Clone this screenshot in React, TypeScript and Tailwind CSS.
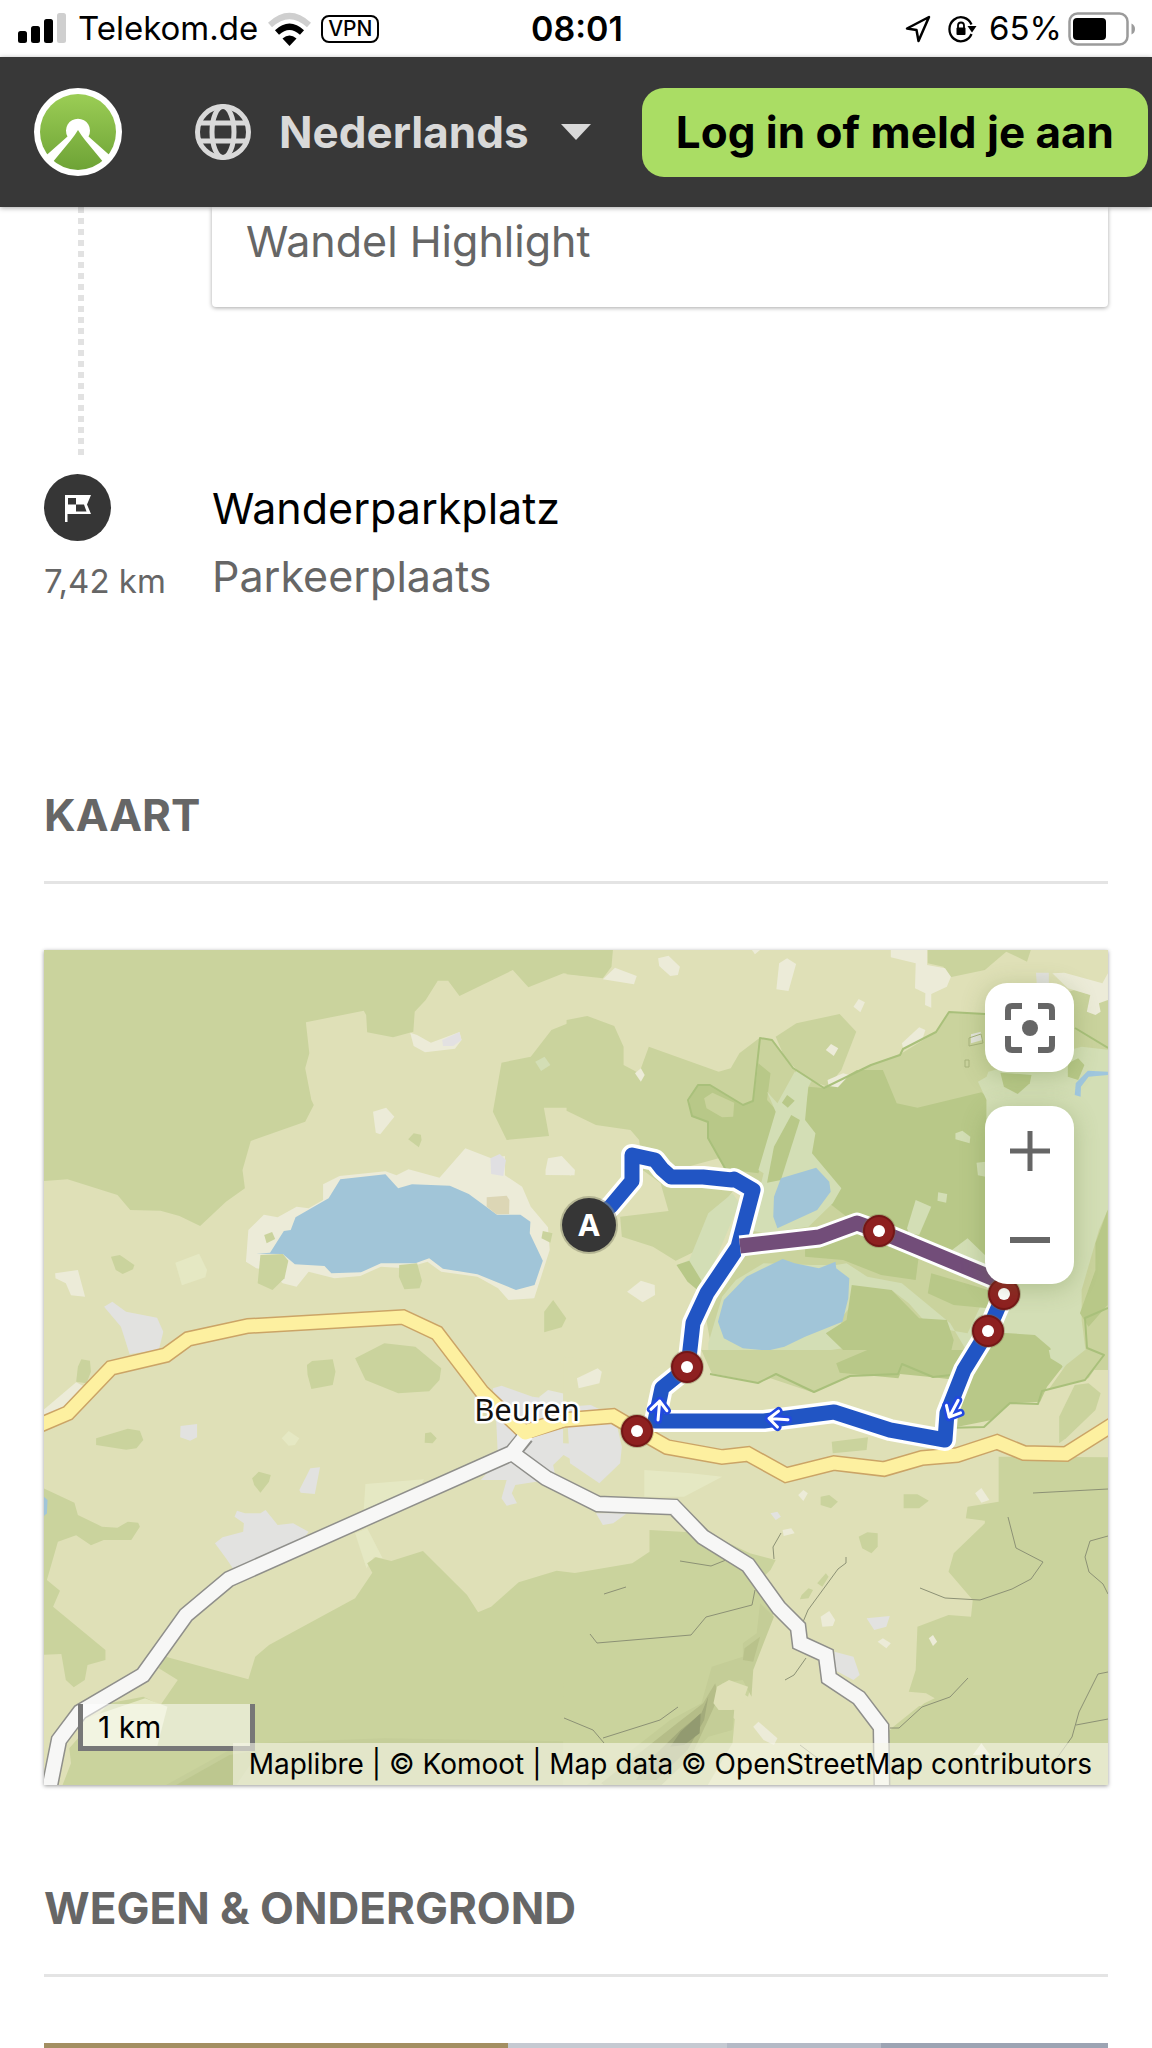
import React from "react";

const C = {
  land: "#dfe0b7",
  wood: "#cad39d",
  dense: "#b8c888",
  park: "#d3deb5",
  water: "#a1c5d8",
  town: "#e2e2e0",
  pale: "#ecebd8",
  field: "#e5e8c3",
};

type Shape = [string, string];

const northWest: Shape[] = [
  [C.wood, "14,20 1580,20 1580,107 1520,100 1418,142 1373,90 1218,168 1185,122 1155,122 1120,180 1088,215 1084,275 1025,292 950,277 947,225 940,212 772,247 782,340 770,385 788,480 795,495 770,545 612,603 588,690 595,745 540,785 465,858 405,828 350,812 262,810 225,765 80,718 0,724 0,20"],
  [C.wood, "1580,230 1485,270 1425,350 1340,368 1315,515 1355,600 1478,588 1463,503 1530,503 1580,535"],
  [C.park, "1438,365 1465,350 1482,375 1455,393"],
  [C.pale, "1075,278 1095,285 1135,308 1218,276 1224,300 1205,326 1118,337 1085,318"],
  ["#e3e1e2", "1168,300 1218,276 1224,300 1200,318 1170,318"],
  [C.pale, "967,515 1005,503 1029,530 988,583 975,578"],
  [C.wood, "1069,598 1085,580 1106,584 1108,600 1100,622"],
  [C.pale, "1468,690 1475,655 1515,648 1553,690 1552,706 1468,705"],
  [C.pale, "598,965 605,870 650,824 690,832 745,800 780,805 822,780 822,733 870,708 1003,694 1035,706 1070,688 1160,713 1235,625 1310,655 1350,648 1350,706 1400,740 1425,800 1475,862 1480,930 1435,1075 1360,1080 1330,1045 1270,1010 1165,995 1125,965 1060,985 990,980 930,1008 855,1015 780,995 745,1040 705,1030 660,990 628,985"],
  ["#e0dfe2", "1308,655 1335,642 1353,660 1345,708 1310,702"],
  [C.water, "628,941 668,938 708,873 728,870 742,832 838,775 872,718 1003,703 1040,745 1080,733 1190,737 1245,762 1327,824 1395,824 1424,845 1422,880 1460,962 1436,1035 1382,1050 1270,1003 1170,986 1130,955 1090,970 990,970 932,997 846,1000 826,978 740,973 705,942"],
  ["#dcd6b5", "1297,772 1355,767 1363,780 1362,822 1325,823 1297,800"],
  [C.wood, "640,945 705,942 721,962 710,1015 675,1050 632,1030"],
  [C.wood, "1043,975 1095,970 1109,1022 1102,1045 1058,1048 1042,1010"],
  [C.wood, "651,885 674,876 683,897 658,910"],
  [C.wood, "1460,873 1488,880 1482,908 1456,895"],
  [C.wood, "206,950 232,945 274,975 270,988 240,1002 220,990"],
  [C.field, "393,968 462,941 485,990 480,1012 412,1036"],
  [C.pale, "44,1000 110,990 131,1070 90,1066 75,1030 45,1015"],
  [C.town, "186,1100 210,1085 250,1115 340,1133 358,1175 345,1230 260,1242 235,1160"],
  [C.wood, "1464,1115 1490,1080 1528,1135 1515,1162 1464,1177"],
];

const northEast: Shape[] = [
  [C.wood, "-10,20 125,20 120,80 95,115 -10,103"],
  [C.wood, "1035,20 1336,20 1322,65 1262,35 1200,90 1100,112 1080,80 1035,70"],
  [C.wood, "-10,240 50,228 128,258 155,320 155,375 200,400 228,320 430,395 465,385 490,340 548,294 585,298 645,385 735,445 870,375 960,340 1060,275 1095,217 1210,223 1460,150 1570,185 1570,1290 430,1290 405,1200 380,1060 310,965 240,920 150,890 145,830 285,813 262,730 210,690 200,600 175,570 75,555 -10,512"],
  [C.land, "340,680 430,655 480,690 540,750 510,900 430,1060 340,1210 300,965 370,930 400,850 470,755"],
  [C.wood, "595,290 655,250 780,222 828,275 785,390 745,440 680,415 620,350"],
  [C.dense, "345,480 370,433 405,435 500,495 530,485 545,370 580,400 570,480 605,520 545,700 450,688 398,595 398,545 352,530"],
  [C.wood, "388,475 412,458 475,488 472,530 440,532 395,505"],
  [C.dense, "690,440 740,445 830,390 905,390 945,490 1005,503 1190,457 1205,470 1205,1010 920,880 850,870 750,790 690,620 675,540"],
  [C.park, "570,455 600,490 650,395 690,430 680,540 710,580 700,640 785,745 760,790 690,860 560,880 520,870 560,700 545,690 595,515"],
  [C.dense, "628,465 650,482 630,503 613,488"],
  [C.dense, "640,525 665,540 610,720 570,728 590,620"],
  [C.park, "1180,425 1205,410 1210,395 1480,320 1560,330 1560,800 1530,870 1480,1050 1480,1140 1490,1220 1500,1290 1180,1290 1100,1150 1030,1090 960,1030 860,1010 800,970 770,975 700,975 560,970 480,1020 440,1070 400,1210 400,1260 540,1270 690,1240 820,1220 780,1140 850,1050 930,1050 980,1090 1040,1160 1150,1180 1205,1060 1205,480"],
  [C.dense, "680,900 850,880 1010,940 1000,1020 900,1005 790,960 680,950"],
  [C.dense, "1045,1000 1210,1050 1210,1105 1110,1095 1035,1060"],
  [C.park, "1105,930 1150,895 1210,955 1200,980"],
  [C.dense, "740,1180 800,1140 815,1035 930,1050 1010,1135 1090,1140 1110,1200 1090,1290 800,1290 790,1230"],
  [C.dense, "1200,1175 1345,1185 1390,1225 1390,1290 1100,1290"],
  [C.dense, "1555,810 1520,910 1520,990 1475,1120 1500,1160 1555,1095"],
  [C.dense, "1245,398 1335,405 1330,430 1295,462 1255,440"],
  [C.dense, "1440,370 1470,355 1488,375 1470,420 1440,410"],
  [C.park, "310,975 345,960 400,820 470,760 490,790 400,1010 360,1030"],
  [C.dense, "308,975 345,962 388,1035 380,1060 340,1025"],
  [C.park, "975,865 1000,780 1045,800 1010,885 980,880"],
  [C.water, "588,830 590,770 610,715 712,683 750,725 754,755 715,810 600,865"],
  [C.water, "428,1145 445,1080 510,1010 615,957 650,970 720,985 768,965 770,985 808,1015 805,1075 788,1145 680,1190 620,1220 570,1232 500,1225 445,1195"],
  ["#9fc6dd", "1460,465 1463,430 1498,392 1556,395 1556,405 1500,410 1478,440 1477,470"],
  [C.pale, "255,55 285,47 318,80 312,105 290,108 258,78"],
  [C.pale, "95,118 130,83 193,108 185,133"],
  [C.pale, "605,70 628,55 654,72 632,153 597,148"],
  [C.pale, "820,200 835,177 853,187 840,217"],
  [C.pale, "928,30 1033,25 1033,75 1085,85 1102,110 1090,140 1045,162 1045,203 1027,195 1028,160 998,145 1000,70 928,52"],
  [C.pale, "1395,100 1430,98 1540,130 1556,100 1556,180 1530,190 1535,215 1520,225 1495,215 1505,165 1440,145"],
  ["#e2e1de", "1348,98 1385,98 1385,135 1350,130"],
  [C.pale, "740,330 755,312 776,325 763,348"],
  [C.pale, "960,310 1010,262 1028,270 1020,295 965,330"],
  [C.pale, "745,420 790,400 808,405 775,442 748,438"],
  [C.park, "655,390 700,420 690,440 650,405"],
  [C.park, "1115,580 1135,572 1158,590 1156,610 1115,598"],
  [C.park, "1065,757 1091,762 1088,788 1063,782"],
  [C.park, "1176,668 1202,665 1202,710 1180,706"],
  ["#e3e4dc", "1160,283 1188,275 1193,300 1160,310"],
  [C.pale, "188,400 205,385 216,405 205,425"],
  [C.pale, "165,1055 205,1022 245,1035 246,1065 210,1087"],
  [C.pale, "-10,670 14,690 0,708"],
  [C.pale, "525,28 552,28 535,43"],
];

const southWest: Shape[] = [
  [C.wood, "915,25 1000,-20 1090,-10 1165,55 1160,90 1130,124 1040,130 945,90"],
  [C.wood, "775,45 790,33 850,28 858,65 850,105 788,117 777,75"],
  [C.wood, "110,50 120,28 145,32 148,65 135,100 105,95"],
  [C.pale, "10,180 105,97 130,110 80,180 10,205"],
  [C.wood, "163,265 255,236 290,242 300,270 280,295 250,299 163,285"],
  [C.town, "408,228 456,222 456,262 436,272 407,262"],
  [C.field, "702,265 722,243 753,265 740,285 722,287"],
  [C.wood, "1118,250 1135,247 1152,265 1140,280 1117,278"],
  [C.wood, "616,385 635,365 670,375 665,395 640,428 622,405"],
  [C.town, "753,420 785,355 813,352 798,432 757,428"],
  [C.field, "945,402 1115,388 1100,420 960,490 940,480"],
  [C.field, "915,550 950,535 995,625 970,620 948,655"],
  [C.town, "508,580 530,562 590,545 592,520 565,500 572,482 595,490 640,490 655,480 690,525 735,520 780,545 755,580 560,655 540,625"],
  [C.wood, "0,410 100,458 110,495 180,530 225,533 255,515 285,518 290,530 265,570 185,570 148,586 105,556 52,575 20,690 58,722 38,770 190,900 190,930 138,945 130,990 98,1012 75,990 62,912 0,915"],
  [C.water, "0,430 22,450 20,490 0,510"],
  [C.wood, "365,920 605,988 625,920 665,885 915,745 965,668 950,640 975,622 1020,633 1112,603 1240,735 1272,787 1310,770 1390,697 1500,662 1600,675 1600,1320 60,1320 90,1240 85,1195 200,1060 300,1040 350,1065 400,990 345,955"],
  [C.field, "120,1110 305,1045 370,1070 340,1190 120,1190"],
  ["#c5ce99", "340,1320 550,1200 610,1180 1000,1165 1580,1175 1580,1320"],
  ["#bdc78f", "370,1320 550,1215 640,1200 560,1320"],
  [C.town, "1315,115 1340,107 1430,140 1580,160 1580,350 1520,315 1490,345 1500,400 1440,395 1380,405 1370,430 1385,460 1355,467 1340,445 1355,390 1280,390 1330,330 1325,220"],
  ["#e5e6de", "1450,140 1475,120 1580,145 1580,180 1450,170"],
];

const southEast: Shape[] = [
  [C.land, "-20,20 400,70 530,90 700,130 850,80 1000,90 1400,100 1560,70 1560,270 1240,330 -20,280"],
  [C.wood, "380,0 960,0 960,40 880,78 810,75 705,128 580,85 545,98 410,70"],
  [C.dense, "770,40 860,0 1400,0 1425,50 1380,110 1360,155 1275,160 1220,210 1100,235 1120,90 1050,82 955,72 950,85 780,68"],
  [C.park, "1385,0 1490,0 1500,50 1430,50 1390,25"],
  [C.wood, "1490,0 1545,15 1500,85 1385,118 1435,45"],
  [C.wood, "1415,200 1460,105 1500,100 1535,130 1520,180 1435,265 1415,280"],
  [C.town, "-10,170 60,165 130,200 150,290 145,340 85,400 0,340"],
  [C.field, "215,360 350,370 440,380 330,440 215,440"],
  [C.wood, "757,275 862,262 858,300 760,310"],
  [C.wood, "1240,320 1570,322 1570,1320 570,1320 930,1135 1010,1065 980,1025 1000,960 1005,830 1095,795 1160,800 1165,750 1095,665 1110,610 1200,520 1200,512 1145,505 1150,470 1240,455"],
  [C.land, "600,1320 935,1135 1025,1060 1055,1045 1030,1030 980,1025 950,1050 600,1050"],
  [C.wood, "930,1135 1010,1068 1560,1068 1560,1320 930,1320"],
  [C.wood, "-20,675 180,640 230,605 230,540 400,550 520,610 595,630 580,660 550,690 575,760 590,790 530,960 525,1000 515,1040 470,1010 420,1060 480,1110 460,1320 -20,1320"],
  [C.land, "590,790 530,880 520,960 520,1040 480,1070 470,1180 390,1320 880,1320 885,1130 720,980 630,860"],
  ["#c4cd97", "550,760 540,850 500,880 500,920 410,950 380,1060 290,1110 30,1320 240,1320 340,1230 400,1160 470,1140 475,1080 430,1070 440,1000 500,990 525,1040 530,960 560,880 590,800"],
  ["#b9c28b", "550,860 505,895 500,930 530,935"],
  ["#b5bd88", "420,1000 385,1060 310,1120 90,1300 120,1320 250,1320 350,1220 395,1120 430,1040"],
  ["#a3ab7b", "400,1040 380,1090 320,1140 240,1220 190,1290 250,1290 340,1200 388,1110"],
  ["#929a70", "378,1090 320,1145 290,1190 330,1185 375,1150"],
  [C.land, "415,1060 425,1010 460,990 515,1010 505,1040 475,1055 470,1080 430,1080"],
  [C.wood, "725,440 750,435 775,455 755,475 725,465"],
  [C.wood, "965,433 1005,433 1038,452 1010,475 965,475"],
  [C.wood, "835,560 860,547 890,550 890,590 872,610 845,595"],
  [C.wood, "670,735 690,715 703,720 690,745 665,748"],
  [C.wood, "715,700 740,670 748,680 730,710"],
  [C.pale, "660,435 675,420 688,430 675,453"],
  [C.town, "580,490 600,485 610,500 595,510"],
  [C.pale, "615,540 640,535 650,550 618,558"],
  [C.pale, "1172,430 1190,414 1213,450 1190,458"],
  [C.pale, "725,800 750,783 767,810 760,828 730,830"],
  [C.town, "858,805 925,798 915,830 880,840"],
  [C.pale, "890,875 905,865 928,880 915,895"],
  [C.town, "765,905 820,920 838,975 820,990 765,960"],
  [C.pale, "1038,865 1050,855 1062,875 1050,888"],
  [C.pale, "530,1130 545,1115 600,1165 590,1185 560,1170"],
  [C.town, "75,490 165,490 125,520 95,525"],
  [C.pale, "20,85 80,55 92,65 85,100 25,115"],
  [C.pale, "1165,1215 1190,1180 1215,1215"],
];

const Tile = ({ at, shapes }: { at: string; shapes: Shape[] }) => (
  <g transform={at}>
    {shapes.map(([fill, points], i) => (
      <polygon key={i} fill={fill} points={points} />
    ))}
  </g>
);

const yellowRoad =
  "M40,1425 L68,1413 L111,1368 L166,1355 L188,1339 L248,1326 L403,1317 L437,1333 L482,1392 L524,1432 L563,1420 L613,1416 L637,1430 L667,1447 L722,1457 L748,1454 L786,1475 L834,1463 L884,1469 L922,1458 L957,1455 L997,1442 L1024,1453 L1066,1454 L1112,1425";
const whiteRoad =
  "M49,1790 L59,1740 L80,1712 L143,1675 L186,1615 L229,1579 L512,1453 L546,1478 L598,1504 L674,1507 L703,1537 L748,1565 L779,1608 L798,1627 L800,1643 L826,1655 L829,1678 L859,1698 L881,1727 L882,1790";
const route =
  "M588,1225 L611,1206 L632,1181 L632,1155 L655,1160 L662,1169 L671,1177 L703,1177 L732,1180 L734,1179 L753,1190 L738,1247 L707,1293 L693,1323 L688,1367 L662,1388 L655,1421 L764,1421 L834,1412 L890,1430 L945,1440 L947,1413 L964,1370 L988,1331 L1004,1294";
const altRoute = "M740,1246 L819,1237 L857,1223 L879,1231 L1004,1283";
const stops = [
  [879, 1231],
  [1004, 1294],
  [988, 1331],
  [687, 1367],
  [637, 1431],
];
const arrows = ["translate(659 1409) rotate(5)", "translate(777 1419) rotate(-86)", "translate(953 1410) rotate(-152)"];

const paths =
  "M590,1634 L597,1643 L691,1635 L706,1617 L752,1605 L755,1590 M604,1594 L626,1587 M680,1561 L711,1566 L726,1560 M781,1533 L773,1547 L774,1559 M846,1557 L846,1563 L838,1569 L808,1610 L803,1622 M785,1680 L794,1675 L806,1658 M603,1738 L660,1720 L678,1707 M564,1718 L593,1730 L604,1743 M890,1728 L899,1728 L922,1707 L950,1697 L968,1678 M1033,1493 L1108,1489 M1008,1517 L1016,1548 L1043,1562 L1031,1579 L1012,1589 L980,1600 L945,1598 L920,1588 M1108,1536 L1090,1541 L1085,1557 L1089,1572 L1103,1584 L1108,1594 M1108,1672 L1098,1674 L1079,1712 L1072,1737 L1052,1765 M1076,1725 L1108,1719 M800,1745 L820,1760";
const reserve =
  "M726,1170 L708,1138 L708,1122 L692,1116 L688,1100 L698,1085 L710,1085 L743,1105 L753,1101 L760,1038 L772,1040 L793,1068 L824,1088 L871,1065 L900,1055 L903,1049 L936,1032 L949,1012 L985,1014 M1075,1028 L1108,1048 M710,1374 L758,1383 L776,1374 L814,1392 L850,1376 L898,1374 L902,1364 L933,1377 L951,1375 M945,1428 L984,1427 L1010,1403 L1038,1404 L1042,1391 L1085,1380 L1104,1355 L1087,1348 L1085,1318 L1108,1308";

function MapDrawing() {
  return (
    <svg viewBox="44 950 1064 835" className="block w-full" role="img" aria-label="Kaart">
      <rect x="44" y="950" width="1064" height="835" fill={C.land} />
      <Tile at="translate(40 940) scale(.3444 .3333)" shapes={northWest} />
      <Tile at="translate(570 940) scale(.3457 .3333)" shapes={northEast} />
      <Tile at="translate(40 1350) scale(.3444 .3333)" shapes={southWest} />
      <Tile at="translate(570 1350) scale(.3457 .3333)" shapes={southEast} />
      <g fill="none" strokeLinejoin="round">
        <path d={reserve} stroke="#a9c07b" strokeWidth="2" />
        <path d="M969,1038 L981,1034 L983,1043 L969,1046Z M965,1060 h4 v7 h-4z" stroke="#a8b37c" />
        <path d={paths} stroke="#8c9175" strokeWidth="1" />
        <path d={yellowRoad} stroke="#cba466" strokeWidth="16" strokeLinejoin="miter" />
        <path d={whiteRoad + " M512,1453 L526,1436"} stroke="#8f8f8b" strokeWidth="17" strokeLinejoin="miter" />
        <path d={yellowRoad} stroke="#fdf0a0" strokeWidth="13" strokeLinejoin="miter" />
        <path d={whiteRoad + " M512,1453 L527,1434"} stroke="#f7f7f6" strokeWidth="14" strokeLinejoin="miter" />
        <path d="M514,1422 L525,1433 L563,1420" stroke="#fdf0a0" strokeWidth="13" />
        <path d={route} stroke="#fff" strokeWidth="22" />
        <path d={route} stroke="#2155c4" strokeWidth="15" />
        <path d={altRoute} stroke="#fff" strokeWidth="21" />
        <path d={altRoute} stroke="#724d79" strokeWidth="15" />
      </g>
      {arrows.map((t) => (
        <g key={t} transform={t} fill="none" strokeLinecap="round" strokeLinejoin="round">
          <path d="M0,11 V-8 M-8,1 L0,-8 L8,1" stroke="#2148e0" strokeWidth="8" />
          <path d="M0,11 V-8 M-8,1 L0,-8 L8,1" stroke="#fff" strokeWidth="3" />
        </g>
      ))}
      {stops.map(([x, y]) => (
        <g key={x}>
          <circle cx={x} cy={y} r="17" fill="#7a6a4a" opacity=".4" />
          <circle cx={x} cy={y} r="15" fill="#8e2020" stroke="#741616" strokeWidth="2" />
          <circle cx={x} cy={y} r="6" fill="#fff" />
        </g>
      ))}
      <circle cx="589" cy="1225" r="29" fill="#8a8a70" opacity=".5" />
      <circle cx="589" cy="1225" r="27" fill="#363636" />
      <text x="589" y="1236" textAnchor="middle" fontFamily="Noto Sans, sans-serif" fontWeight="700" fontSize="31" fill="#fff">A</text>
      <text x="527" y="1421" textAnchor="middle" fontFamily="Noto Sans, sans-serif" fontSize="31" fill="#111" stroke="#fff" strokeWidth="5" paintOrder="stroke" strokeLinejoin="round">Beuren</text>
    </svg>
  );
}

function StatusBar() {
  return (
    <div className="grid h-[57px] grid-cols-[1fr_auto_1fr] items-center bg-white pr-4 pl-[18px] text-[33px] text-black">
      <div className="flex items-center">
        <svg width="48" height="31" viewBox="0 0 48 31" aria-hidden="true">
          <rect x="0" y="18" width="9" height="12" rx="2.5" />
          <rect x="13" y="13" width="9" height="17" rx="2.5" />
          <rect x="26" y="6" width="9" height="24" rx="2.5" />
          <rect x="39" y="0" width="9" height="30" rx="2.5" fill="#cfcfcf" />
        </svg>
        <span className="ml-3">Telekom.de</span>
        <svg className="ml-2.5" width="43" height="34" viewBox="0 0 43 34" aria-hidden="true">
          <path d="M2 13 Q21.500 -5 41 13" fill="none" stroke="#cfcfcf" strokeWidth="6" />
          <path d="M9 20.500 Q21.500 9 34 20.500" fill="none" stroke="#000" strokeWidth="6" />
          <path d="M14.500 26.500 Q21.500 20.500 28.500 26.500 L21.500 34Z" />
        </svg>
        <span className="ml-2.5 rounded-lg border-2 border-black px-[5px] text-[21px] leading-6 font-medium">VPN</span>
      </div>
      <span className="text-[34px] font-semibold">08:01</span>
      <div className="flex items-center justify-end">
        <svg width="26" height="28" viewBox="0 0 26 28" fill="none" stroke="#000" strokeWidth="2.500" strokeLinejoin="round" aria-hidden="true">
          <path d="M2 13.500 L24 2 L13.500 26 L11.500 15Z" />
        </svg>
        <svg className="ml-4" width="30" height="28" viewBox="0 0 30 28" aria-hidden="true">
          <path d="M24.500 19 A11.500 12 0 1 1 24.500 9.500" fill="none" stroke="#000" strokeWidth="2.300" />
          <path d="M20.500 11 H29.500 L25 17.500Z" />
          <rect x="9.500" y="12.500" width="9" height="7.500" rx="1" />
          <path d="M11 13 V10.500 A3 3 0 0 1 17 10.500 V13" fill="none" stroke="#000" strokeWidth="1.800" />
        </svg>
        <span className="mr-1.5 ml-3">65%</span>
        <svg width="68" height="34" viewBox="0 0 68 34" aria-hidden="true">
          <rect x="1.500" y="1.500" width="58" height="31" rx="8" fill="#fff" stroke="#9b9b9b" strokeWidth="2.500" />
          <rect x="5" y="6" width="33" height="22" rx="4" />
          <path d="M63.500 11.500 Q67 13 67 17 Q67 21 63.500 22.500Z" fill="#9b9b9b" />
        </svg>
      </div>
    </div>
  );
}

function Header() {
  return (
    <header className="relative flex h-[150px] items-center bg-[#383838] pr-1 pl-[34px] shadow-[0_1px_5px_rgba(0,0,0,0.35)]">
      <a href="#" aria-label="komoot" className="shrink-0">
        <svg width="88" height="88" viewBox="0 0 88 88" aria-hidden="true">
          <defs>
            <linearGradient id="logo" x1="0" y1="0" x2="0" y2="1">
              <stop offset="0" stopColor="#9bcd55" />
              <stop offset="1" stopColor="#6ea336" />
            </linearGradient>
          </defs>
          <circle cx="44" cy="44" r="44" fill="#fff" />
          <circle cx="44" cy="44" r="38" fill="url(#logo)" />
          <path d="M11.500 68 L33.500 48.500 A12 12 0 1 1 54.500 48.500 L76.500 68 L70 75 L51 52 Q47 47 44 42 Q41 47 37 52 L18 75Z" fill="#fff" />
        </svg>
      </a>
      <div className="ml-[73px] flex items-center text-[#d9d9d9]">
        <svg width="56" height="56" viewBox="0 0 56 56" fill="none" stroke="#d9d9d9" strokeWidth="5" aria-hidden="true">
          <circle cx="28" cy="28" r="25.500" />
          <ellipse cx="28" cy="28" rx="11" ry="25.500" />
          <path d="M5 19 H51 M5 37 H51" />
        </svg>
        <select aria-label="Taal" className="ml-7 appearance-none bg-transparent text-[44px] leading-[56px] font-bold outline-none">
          <option>Nederlands</option>
        </select>
        <svg className="ml-8" width="30" height="16" viewBox="0 0 30 16" fill="#d9d9d9" aria-hidden="true">
          <path d="M0 0 H30 L15 16Z" />
        </svg>
      </div>
      <button className="ml-auto h-[89px] rounded-[22px] bg-[#aadd64] px-[34px] text-[44px] font-bold whitespace-nowrap text-black">
        Log in of meld je aan
      </button>
    </header>
  );
}

const surfaces = [
  "grow-[464] bg-[#a38f62]",
  "grow-[218] bg-[#c5cad2]",
  "grow-[154] bg-[#b4bac6]",
  "grow-[227] bg-[#9ca4b3]",
];

const heading = "border-b-[3px] border-[#e4e4e4] pb-10 text-[44px] leading-[52px] font-bold text-[#666666]";

export default function App() {
  return (
    <div className="overflow-x-hidden bg-white font-['Inter',sans-serif] text-black">
      <StatusBar />
      <Header />
      <main className="px-11">
        <div className="flex">
          <div className="w-[168px] shrink-0 pl-[34px]">
            <div className="h-[252px] w-[6px] bg-[repeating-linear-gradient(to_bottom,#e2e2e2_0px,#e2e2e2_6px,transparent_6px,transparent_11px)]" />
          </div>
          <div className="h-[100px] grow rounded-b-sm px-[34px] pt-2 text-[43px] leading-[52px] text-[#666666] shadow-[0_1px_4px_rgba(0,0,0,0.35)] [clip-path:inset(0_-8px_-8px_-8px)]">
            Wandel Highlight
          </div>
        </div>
        <div className="flex pt-[15px]">
          <div className="flex w-[168px] shrink-0 flex-col">
            <span className="flex size-[67px] items-center justify-center rounded-full bg-[#363636]">
              <svg width="28" height="28" viewBox="0 0 28 28" aria-hidden="true">
                <path fillRule="evenodd" fill="#fff" d="M1 1 H27 L23 10.500 L27 20 H3.500 V28 H1Z M4 4 V10.500 H12 V4Z M12 10.500 V17.500 H22.500 L20 10.500Z" />
              </svg>
            </span>
            <span className="pt-[18px] text-[33px] leading-[44px] whitespace-nowrap text-[#666666]">7,42 km</span>
          </div>
          <div className="text-[43px] leading-[68px]">
            <div>Wanderparkplatz</div>
            <div className="text-[#666666]">Parkeerplaats</div>
          </div>
        </div>
        <h2 className={"mt-[179px] " + heading}>KAART</h2>
        <section className="relative mt-[66px] shadow-[0_1px_4px_rgba(0,0,0,0.4)]">
          <MapDrawing />
          <button aria-label="Centreer" className="absolute top-[33px] right-[34px] flex size-[89px] items-center justify-center rounded-[22px] bg-white shadow-[0_4px_24px_rgba(90,120,50,0.3)]">
            <svg width="50" height="50" viewBox="0 0 50 50" fill="none" stroke="#666" strokeWidth="6" aria-hidden="true">
              <path d="M3 17 V7 Q3 3 7 3 H17 M33 3 H43 Q47 3 47 7 V17 M47 33 V43 Q47 47 43 47 H33 M17 47 H7 Q3 47 3 43 V33" />
              <circle cx="25" cy="25" r="8" fill="#666" stroke="none" />
            </svg>
          </button>
          <div className="absolute top-[156px] right-[34px] flex w-[89px] flex-col rounded-[22px] bg-white shadow-[0_4px_24px_rgba(90,120,50,0.3)]">
            <button aria-label="Zoom in" className="flex h-[89px] items-center justify-center">
              <svg width="40" height="40" viewBox="0 0 40 40" stroke="#666" strokeWidth="5" aria-hidden="true">
                <path d="M0 20 H40 M20 0 V40" />
              </svg>
            </button>
            <button aria-label="Zoom uit" className="flex h-[89px] items-center justify-center">
              <svg width="40" height="40" viewBox="0 0 40 40" stroke="#666" strokeWidth="6" aria-hidden="true">
                <path d="M0 20 H40" />
              </svg>
            </button>
          </div>
          <div className="absolute bottom-[34px] left-[34px] h-[47px] w-[177px] border-x-[5px] border-b-[5px] border-[#777] bg-white/50 pl-[15px] text-[30px] leading-[46px]">1 km</div>
          <div className="absolute right-0 bottom-0 flex h-[42px] items-center bg-[#f6f7ea]/60 px-4 text-[28px] whitespace-pre">
            <a href="#">Maplibre</a> | <a href="#">© Komoot</a> | Map data <a href="#">© OpenStreetMap contributors</a>
          </div>
        </section>
        <h2 className={"mt-[97px] " + heading}>WEGEN &amp; ONDERGROND</h2>
        <div className="mt-[66px] flex h-[5px]">
          {surfaces.map((s) => (
            <div key={s} className={s} />
          ))}
        </div>
      </main>
    </div>
  );
}
